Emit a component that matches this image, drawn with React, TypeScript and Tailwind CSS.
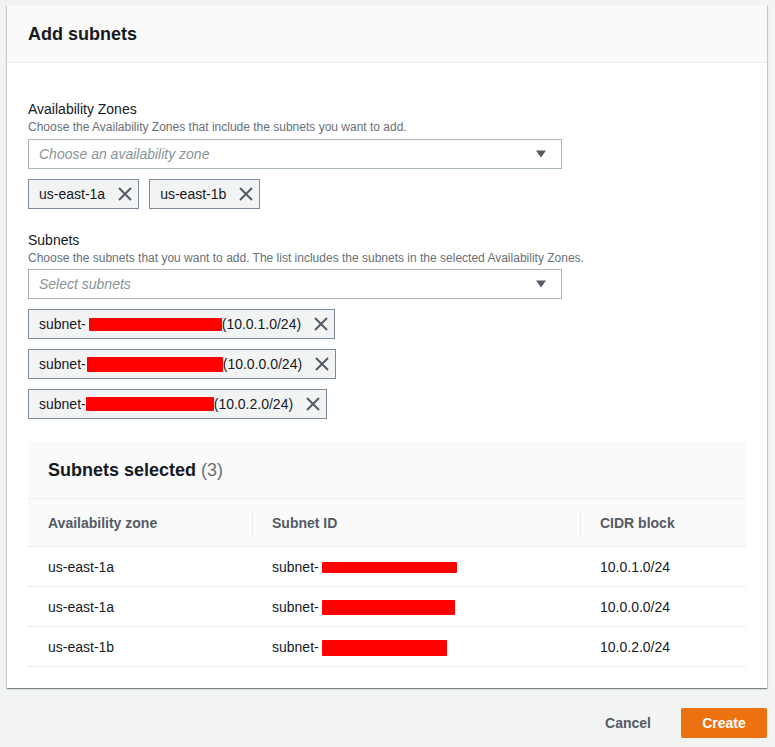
import React from "react";

const font = { fontFamily: '"Liberation Sans", Arial, sans-serif' };

const XIcon = () => (
  <svg width="16" height="16" viewBox="0 0 16 16" className="shrink-0">
    <path d="M2 2L14 14M14 2L2 14" stroke="#545b64" strokeWidth="2" fill="none" />
  </svg>
);

const Caret = () => (
  <svg width="12" height="8" viewBox="0 0 12 8">
    <path d="M1 0.5H11L6 7.5Z" fill="#545b64" />
  </svg>
);

const Redact = ({ w, h = 13, ml = 2 }: { w: number; h?: number; ml?: number }) => (
  <span
    className="inline-block bg-[#ff0000] rounded-[1px] align-middle"
    style={{ width: w, height: h, marginLeft: ml }}
  />
);

const Token = ({ children }: { children: React.ReactNode }) => (
  <div className="flex h-[30px] w-fit items-center gap-[12px] border border-[#7d8998] bg-[#f2f3f3] pl-[10px] pr-[5px] text-[14px] text-[#16191f]">
    <div className="flex items-center">{children}</div>
    <XIcon />
  </div>
);

const Select = ({ placeholder }: { placeholder: string }) => (
  <div className="mt-[4px] flex h-[30px] w-[534px] items-center justify-between border border-[#aab7b8] bg-white pl-[10px] pr-[14px]">
    <span className="text-[14px] italic text-[#879596]">{placeholder}</span>
    <Caret />
  </div>
);

const subnetTokens = [
  { w: 133, h: 13, ml: 3, cidr: "10.0.1.0/24" },
  { w: 136, h: 15, ml: 1, cidr: "10.0.0.0/24" },
  { w: 128, h: 14, ml: 0, cidr: "10.0.2.0/24" },
];

const rows = [
  { az: "us-east-1a", w: 135, h: 11, cidr: "10.0.1.0/24" },
  { az: "us-east-1a", w: 133, h: 15, cidr: "10.0.0.0/24" },
  { az: "us-east-1b", w: 125, h: 16, cidr: "10.0.2.0/24" },
];

export default function App() {
  return (
    <div className="min-h-[747px] w-[775px] bg-[#f2f3f3] pl-[7px] pt-[5px]" style={font}>
      <div className="w-[760px] bg-white shadow-[0_1px_1px_0_rgba(0,28,36,0.3),1px_1px_1px_0_rgba(0,28,36,0.15),-1px_1px_1px_0_rgba(0,28,36,0.15)]">
        <div className="flex h-[58px] items-center border-b border-[#eaeded] bg-[#fafafa] px-[21px] pt-[2px]">
          <h2 className="text-[18px] font-bold text-[#16191f]">Add subnets</h2>
        </div>

        <div className="px-[21px] pb-[21px] pt-[36px]">
          <div className="text-[14px] leading-[20px] text-[#16191f]">Availability Zones</div>
          <div className="text-[12px] leading-[16px] text-[#687078]">
            Choose the Availability Zones that include the subnets you want to add.
          </div>
          <Select placeholder="Choose an availability zone" />
          <div className="mt-[10px] flex gap-[10px]">
            <Token>us-east-1a</Token>
            <Token>us-east-1b</Token>
          </div>

          <div className="mt-[21px] text-[14px] leading-[20px] text-[#16191f]">Subnets</div>
          <div className="text-[12px] leading-[16px] text-[#687078]">
            Choose the subnets that you want to add. The list includes the subnets in the selected Availability Zones.
          </div>
          <div className="-mt-px">
            <Select placeholder="Select subnets" />
          </div>
          <div className="mt-[10px] flex flex-col gap-[10px]">
            {subnetTokens.map((t) => (
              <Token key={t.cidr}>
                <span>subnet-</span>
                <Redact w={t.w} h={t.h} ml={t.ml} />
                <span>({t.cidr})</span>
              </Token>
            ))}
          </div>

          <div className="mt-[23px] w-[718px]">
            <div className="flex h-[56px] items-center bg-[#fafafa] px-[20px]">
              <h3 className="text-[18px] font-bold text-[#16191f]">
                Subnets selected <span className="font-normal text-[#687078]">(3)</span>
              </h3>
            </div>
            <div className="grid h-[49px] grid-cols-[224px_328px_166px] items-center border-y border-[#eaeded] bg-[#fafafa] pt-[2px] text-[14px] font-bold text-[#545b64]">
              <div className="px-[20px]">Availability zone</div>
              <div className="flex h-[26px] items-center border-l border-[#eaeded] px-[19px]">Subnet ID</div>
              <div className="flex h-[26px] items-center border-l border-[#eaeded] px-[19px]">CIDR block</div>
            </div>
            {rows.map((r, i) => (
              <div
                key={i}
                className="grid h-[40px] grid-cols-[224px_328px_166px] items-center border-b border-[#eaeded] pt-[2px] text-[14px] text-[#16191f]"
              >
                <div className="px-[20px]">{r.az}</div>
                <div className="flex items-center px-[20px]">
                  <span>subnet-</span>
                  <Redact w={r.w} h={r.h} ml={3} />
                </div>
                <div className="px-[20px]">{r.cidr}</div>
              </div>
            ))}
          </div>
        </div>
      </div>

      <div className="mt-[20px] flex w-[760px] items-center justify-end gap-[14px]">
        <button className="px-[16px] text-[14px] font-bold text-[#545b64]">Cancel</button>
        <button className="h-[30px] w-[86px] rounded-[2px] bg-[#ec7211] text-[14px] font-bold text-white">
          Create
        </button>
      </div>
    </div>
  );
}
